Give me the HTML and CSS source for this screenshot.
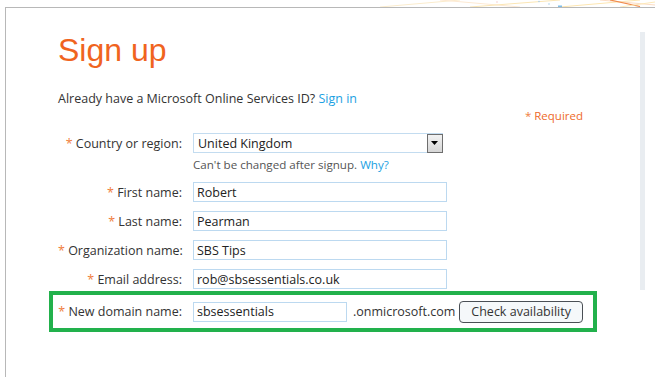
FILE: index.html
```html
<!DOCTYPE html>
<html lang="en">
<head>
    <meta charset="UTF-8">
    <meta name="viewport" content="width=device-width, initial-scale=1.0">
    <title>Sign up</title>
    <link rel="stylesheet" href="styles.css">
</head>
<body>

<div class="deco">
    <svg width="655" height="7" viewBox="0 0 655 7">
        <line x1="380" y1="7" x2="460" y2="0" stroke="#fbeccd" stroke-width="1"/>
        <line x1="440" y1="0" x2="520" y2="7" stroke="#fde9d2" stroke-width="1"/>
        <line x1="470" y1="7" x2="560" y2="0" stroke="#fbe6b4" stroke-width="1"/>
        <line x1="560" y1="7" x2="640" y2="0" stroke="#fde6b0" stroke-width="1"/>
        <line x1="600" y1="0" x2="655" y2="5" stroke="#fcdcc4" stroke-width="1"/>
        <line x1="610" y1="0" x2="640" y2="6.5" stroke="#f08a4a" stroke-width="1.2"/>
        <line x1="620" y1="7" x2="655" y2="2" stroke="#fde9b8" stroke-width="1"/>
        <circle cx="539" cy="1.5" r="0.8" fill="#a8cfe8"/>
        <circle cx="549" cy="4" r="0.8" fill="#a8cfe8"/>
        <rect x="558" y="5.5" width="4" height="1.5" fill="#7fbde6"/>
        <circle cx="497" cy="2" r="0.7" fill="#f4c0c0"/>
    </svg>
</div>

<div class="frame">
    <div class="content">
        <h1 class="title">Sign up</h1>
        <p class="intro">Already have a Microsoft Online Services ID? <a href="#">Sign in</a></p>
        <p class="required"><span class="star">*</span> Required</p>

        <div class="row">
            <label class="label"><span class="star">*</span> Country or region:</label>
            <div class="select">
                <span>United Kingdom</span>
                <span class="arrow">
                    <svg width="8" height="5" viewBox="0 0 8 5"><path d="M0 0h7L3.5 4z" fill="#000"/></svg>
                </span>
            </div>
        </div>
        <div class="hint">Can't be changed after signup. <a href="#">Why?</a></div>

        <div class="row">
            <label class="label"><span class="star">*</span> First name:</label>
            <input class="field" type="text" value="Robert">
        </div>
        <div class="row">
            <label class="label"><span class="star">*</span> Last name:</label>
            <input class="field" type="text" value="Pearman">
        </div>
        <div class="row">
            <label class="label"><span class="star">*</span> Organization name:</label>
            <input class="field" type="text" value="SBS Tips">
        </div>
        <div class="row">
            <label class="label"><span class="star">*</span> Email address:</label>
            <input class="field" type="text" value="rob@sbsessentials.co.uk">
        </div>

        <div class="row domain">
            <label class="label"><span class="star">*</span> New domain name:</label>
            <input class="field short" type="text" value="sbsessentials">
            <span class="suffix">.onmicrosoft.com</span>
            <button class="check">Check availability</button>
        </div>
    </div>
    <div class="bar"></div>
</div>

</body>
</html>
```

FILE: styles.css
```css
body {
    margin: 0;
    font-family: "Open Sans", Arial, sans-serif;
    font-size: 12.5px;
    color: #333;
    background-color: #fff;
    overflow: hidden;
}
a {
    color: #1ba1e2;
    text-decoration: none;
}
.deco {
    height: 7px;
}
.deco svg {
    display: block;
}
.frame {
    display: flex;
    margin-left: 5px;
    height: 370px;
    border-top: 1px solid #b8b8b8;
    border-left: 1px solid #b8b8b8;
}
.content {
    width: 525px;
    padding-left: 52px;
}
.bar {
    width: 5px;
    height: 258px;
    margin: 24px 10px 0 auto;
    background-color: #e9edf1;
}
.title {
    margin: 24px 0 22px 0;
    font-family: "Liberation Sans", Arial, sans-serif;
    font-size: 32px;
    font-weight: normal;
    line-height: 37px;
    color: #f0641e;
}
.intro {
    margin: 0;
    line-height: 16px;
}
.required {
    margin: 0 0 9px 0;
    font-size: 11.5px;
    line-height: 17px;
    text-align: right;
    color: #ee6a2a;
}
.star {
    color: #f07d3c;
}
.row {
    display: flex;
    align-items: center;
    height: 20px;
    margin-bottom: 9px;
}
.label {
    width: 124px;
    margin-right: 11px;
    text-align: right;
    white-space: nowrap;
}
.field {
    box-sizing: border-box;
    width: 254px;
    height: 20px;
    margin: 0;
    padding: 0 3px;
    border: 1px solid #bcd9f0;
    font-family: "Open Sans", Arial, sans-serif;
    font-size: 12.5px;
    color: #222;
    outline: none;
}
.field.short {
    width: 154px;
}
.select {
    box-sizing: border-box;
    display: flex;
    align-items: center;
    justify-content: space-between;
    width: 250px;
    height: 20px;
    padding-left: 4px;
    border: 1px solid #c3dcf0;
    color: #222;
}
.arrow {
    box-sizing: border-box;
    display: flex;
    align-items: center;
    justify-content: center;
    width: 16px;
    height: 19px;
    margin-right: -1px;
    border: 1px solid #6e6e6e;
    background: linear-gradient(#f2f2f2, #d6d6d6);
}
.hint {
    height: 17px;
    margin: -9px 0 9px 135px;
    padding-top: 3px;
    font-size: 11.6px;
    line-height: 18px;
    color: #555;
}
.domain {
    height: 29px;
    margin: -7px 0 0 -9px;
    width: 535px;
    padding: 2px 0 2px 5px;
    border: 4px solid #22b14c;
}
.suffix {
    margin-left: 6px;
}
.check {
    height: 22px;
    margin-left: 4px;
    padding: 0 11px;
    border: 1px solid #4a4f55;
    border-radius: 4px;
    background-color: #f5f8fa;
    font-family: "Open Sans", Arial, sans-serif;
    font-size: 12.5px;
    color: #333;
}
```
